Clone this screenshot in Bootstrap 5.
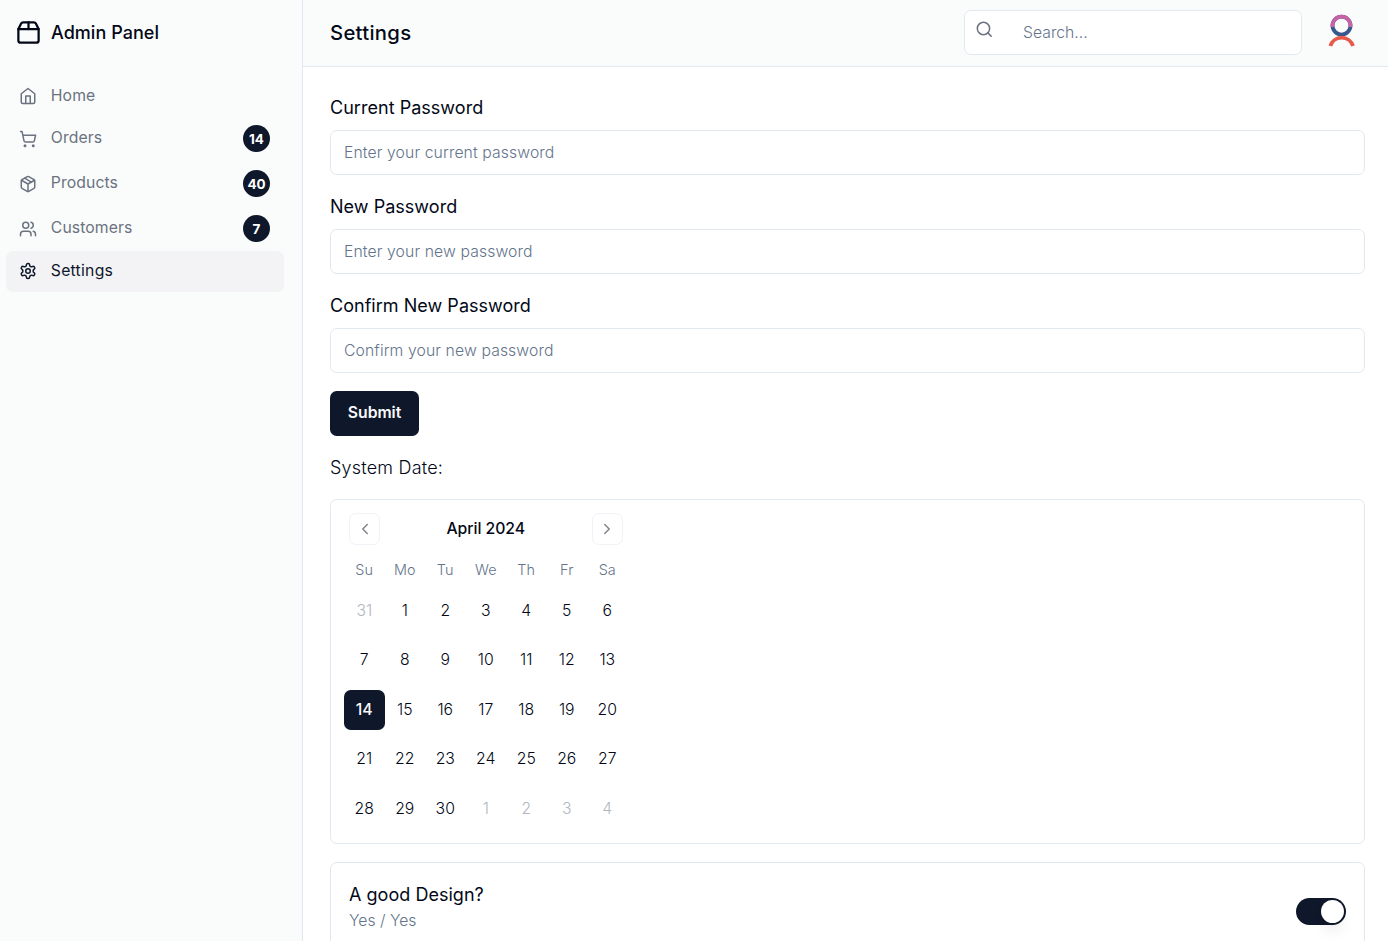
<!DOCTYPE html>
<html lang="en">
<head>
<meta charset="utf-8">
<meta name="viewport" content="width=device-width, initial-scale=1">
<title>Settings</title>
<link href="https://cdn.jsdelivr.net/npm/bootstrap@5.3.0/dist/css/bootstrap.min.css" rel="stylesheet">
<style>
:root { --ink:#020817; --navy:#0f172a; --line:#e2e8f0; --muted-gray:#6b7280; --slate:#64748b; }
body { font-family:Inter,sans-serif; font-size:15.75px; line-height:22.5px; color:var(--ink); background:#fff; height:941px; overflow:hidden; }
svg { display:block; flex:none; fill:none; stroke:currentColor; stroke-width:2; stroke-linecap:round; stroke-linejoin:round; }
.sidebar { width:303px; border-right:1px solid var(--line); background:#fafcfb; }
.brand { height:67px; padding:0 0 1px 15px; gap:9px; font-size:18px; font-weight:500; letter-spacing:.04px; }
.brand svg { margin-top:-2px; }
.side-nav { padding:8.5px 18px 0 6px; }
.side-nav .nav-link { display:flex; align-items:center; gap:13.8px; padding:9px 14px 9px 13px; color:var(--muted-gray); border-radius:7px; line-height:22.5px; letter-spacing:.1px; }
.side-nav .nav-link span:first-of-type { position:relative; top:-.6px; }
.side-nav .nav-link.single span:first-of-type { top:0; }
.side-nav .nav-link.active { background:#f3f3f6; color:var(--navy); letter-spacing:.25px; }
.count { width:27px; height:27px; margin-left:auto; padding-top:1px; border-radius:50%; background:var(--navy); color:#fff; font-size:13.5px; font-weight:700; letter-spacing:0; }
.topbar { height:67px; border-bottom:1px solid var(--line); background:#fafcfb; padding:0 26px 0 27px; }
.topbar h1 { font-size:20.25px; font-weight:500; letter-spacing:.3px; margin:0; }
.search-box { width:338px; height:45px; margin:-2px 20px 0 0; border:1px solid var(--line); border-radius:6.75px; background:#fff; padding:0 10px; gap:30px; }
.search-box input { border:0; outline:0; padding:0; background:none; width:220px; margin:2px 0 0 -.5px; }
.search-box svg { color:var(--muted-gray); margin:-5px 0 0; }
::placeholder, .form-control::placeholder { color:var(--slate); opacity:1; font-weight:300; letter-spacing:.1px; }
.search-box input::placeholder { letter-spacing:0; }
.content-area { padding:27px 23px 0 27px; }
.form-label { display:block; font-size:18px; line-height:27px; margin:0 0 9px; letter-spacing:.03px; }
.sys-date { margin:18px 0; font-weight:300; letter-spacing:.2px; }
.field { margin-bottom:18px; }
.field .form-control { height:45px; border-color:var(--line); border-radius:6.75px; font-size:15.75px; padding:9px 13px; color:var(--ink); }
.btn-submit { width:89px; height:45px; padding:0 0 2px; background:var(--navy); color:#f8fafc; border-radius:6.75px; font-size:15.75px; font-weight:600; letter-spacing:-.05px; border:0; }
.panel { border:1px solid var(--line); border-radius:6.75px; }
.calendar { height:345px; padding:13px; }
.cal-inner { width:283.5px; }
.cal-head { height:32px; padding:0 5px; margin-bottom:14px; font-weight:500; letter-spacing:-.05px; }
.cal-btn { width:31px; height:32px; padding:0; border:1px solid #f0f2f7; border-radius:6.75px; background:none; color:#80848b; display:flex; align-items:center; justify-content:center; }
.cal-grid { display:grid; grid-template-columns:repeat(7,40.5px); text-align:center; }
.cal-grid.days { font-size:14.4px; line-height:22px; color:var(--slate); margin-bottom:9.5px; font-weight:300; letter-spacing:.1px; }
.cal-grid.dates { row-gap:9px; font-weight:300; }
.cal-grid.dates span { height:40.5px; line-height:39.5px; border-radius:6.75px; }
.cal-grid .off { color:#b0b7c0; }
.cal-grid .sel { background:var(--navy); color:#f8fafc; font-weight:500; }
.design-row { margin-top:18px; height:120px; padding:18px; }
.design-title { font-size:18px; line-height:27px; letter-spacing:.03px; }
.design-note { color:var(--slate); font-weight:300; margin-top:2px; }
.toggle { width:50px; height:27px; margin-top:17px; border-radius:14px; background:var(--navy); padding:2px 2.5px; display:flex; justify-content:flex-end; }
.toggle span { width:23px; height:23px; border-radius:50%; background:#fff; box-shadow:0 10px 15px -3px rgba(0,0,0,.1),0 4px 6px -4px rgba(0,0,0,.1); }
.avatar { stroke-linecap:butt; stroke-width:3.8; }
</style>
</head>
<body>
<div class="d-flex h-100">
  <aside class="sidebar flex-shrink-0 h-100">
    <div class="brand d-flex align-items-center">
      <svg width="27" height="27" viewBox="0 0 24 24"><path d="M3 9h18v10a2 2 0 0 1-2 2H5a2 2 0 0 1-2-2V9Z"/><path d="m3 9 2.45-4.9A2 2 0 0 1 7.24 3h9.52a2 2 0 0 1 1.8 1.1L21 9"/><path d="M12 3v6"/></svg>
      <span>Admin Panel</span>
    </div>
    <nav class="side-nav nav flex-column flex-nowrap">
      <a class="nav-link single"><svg width="18" height="18" viewBox="0 0 24 24"><path d="m3 9 9-7 9 7v11a2 2 0 0 1-2 2H5a2 2 0 0 1-2-2z"/><path d="M9 22V12h6v10"/></svg><span>Home</span></a>
      <a class="nav-link"><svg width="18" height="18" viewBox="0 0 24 24"><circle cx="8" cy="21" r="1"/><circle cx="19" cy="21" r="1"/><path d="M2.05 2.05h2l2.66 12.42a2 2 0 0 0 2 1.58h9.78a2 2 0 0 0 1.95-1.57l1.65-7.43H5.12"/></svg><span>Orders</span><span class="count d-flex align-items-center justify-content-center">14</span></a>
      <a class="nav-link"><svg width="18" height="18" viewBox="0 0 24 24"><path d="m7.5 4.27 9 5.15"/><path d="M21 8a2 2 0 0 0-1-1.73l-7-4a2 2 0 0 0-2 0l-7 4A2 2 0 0 0 3 8v8a2 2 0 0 0 1 1.73l7 4a2 2 0 0 0 2 0l7-4A2 2 0 0 0 21 16Z"/><path d="m3.3 7 8.7 5 8.7-5M12 22V12"/></svg><span>Products</span><span class="count d-flex align-items-center justify-content-center">40</span></a>
      <a class="nav-link"><svg width="18" height="18" viewBox="0 0 24 24"><path d="M16 21v-2a4 4 0 0 0-4-4H6a4 4 0 0 0-4 4v2"/><circle cx="9" cy="7" r="4"/><path d="M22 21v-2a4 4 0 0 0-3-3.87M16 3.13a4 4 0 0 1 0 7.75"/></svg><span>Customers</span><span class="count d-flex align-items-center justify-content-center">7</span></a>
      <a class="nav-link single active"><svg width="18" height="18" viewBox="0 0 24 24"><path d="M12.22 2h-.44a2 2 0 0 0-2 2v.18a2 2 0 0 1-1 1.73l-.43.25a2 2 0 0 1-2 0l-.15-.08a2 2 0 0 0-2.73.73l-.22.38a2 2 0 0 0 .73 2.73l.15.1a2 2 0 0 1 1 1.72v.51a2 2 0 0 1-1 1.74l-.15.09a2 2 0 0 0-.73 2.73l.22.38a2 2 0 0 0 2.73.73l.15-.08a2 2 0 0 1 2 0l.43.25a2 2 0 0 1 1 1.73V20a2 2 0 0 0 2 2h.44a2 2 0 0 0 2-2v-.18a2 2 0 0 1 1-1.73l.43-.25a2 2 0 0 1 2 0l.15.08a2 2 0 0 0 2.73-.73l.22-.39a2 2 0 0 0-.73-2.73l-.15-.08a2 2 0 0 1-1-1.74v-.5a2 2 0 0 1 1-1.74l.15-.09a2 2 0 0 0 .73-2.73l-.22-.38a2 2 0 0 0-2.73-.73l-.15.08a2 2 0 0 1-2 0l-.43-.25a2 2 0 0 1-1-1.73V4a2 2 0 0 0-2-2z"/><circle cx="12" cy="12" r="3"/></svg><span>Settings</span></a>
    </nav>
  </aside>
  <div class="flex-grow-1">
    <header class="topbar d-flex align-items-center">
      <h1 class="me-auto">Settings</h1>
      <div class="search-box d-flex align-items-center">
        <svg width="18.500" height="18.500" viewBox="0 0 24 24"><circle cx="11" cy="11" r="8"/><path d="m21 21-4.3-4.3"/></svg>
        <input type="search" placeholder="Search...">
      </div>
      <svg class="avatar" width="40" height="40" viewBox="0 0 40 40"><circle cx="19.5" cy="12.6" r="9" stroke="#38578f"/><path d="M10.5 14V12.600A9 9 0 0 1 28.500 12.600V14" stroke="#c563a5"/><path d="M8.300 33A11.900 11.900 0 0 1 31 33" stroke="#e8594b"/></svg>
    </header>
    <main class="content-area">
      <div class="field"><label class="form-label" for="p1">Current Password</label><input id="p1" class="form-control" type="password" placeholder="Enter your current password"></div>
      <div class="field"><label class="form-label" for="p2">New Password</label><input id="p2" class="form-control" type="password" placeholder="Enter your new password"></div>
      <div class="field"><label class="form-label" for="p3">Confirm New Password</label><input id="p3" class="form-control" type="password" placeholder="Confirm your new password"></div>
      <button class="btn btn-submit d-block">Submit</button>
      <div class="form-label sys-date">System Date:</div>
      <section class="panel calendar">
        <div class="cal-inner">
          <div class="cal-head d-flex align-items-center justify-content-between">
            <button class="cal-btn"><svg width="18" height="18" viewBox="0 0 24 24"><path d="m15 18-6-6 6-6"/></svg></button>
            <span>April 2024</span>
            <button class="cal-btn"><svg width="18" height="18" viewBox="0 0 24 24"><path d="m9 18 6-6-6-6"/></svg></button>
          </div>
          <div class="cal-grid days"><span>Su</span><span>Mo</span><span>Tu</span><span>We</span><span>Th</span><span>Fr</span><span>Sa</span></div>
          <div class="cal-grid dates">
            <span class="off">31</span><span>1</span><span>2</span><span>3</span><span>4</span><span>5</span><span>6</span>
            <span>7</span><span>8</span><span>9</span><span>10</span><span>11</span><span>12</span><span>13</span>
            <span class="sel">14</span><span>15</span><span>16</span><span>17</span><span>18</span><span>19</span><span>20</span>
            <span>21</span><span>22</span><span>23</span><span>24</span><span>25</span><span>26</span><span>27</span>
            <span>28</span><span>29</span><span>30</span><span class="off">1</span><span class="off">2</span><span class="off">3</span><span class="off">4</span>
          </div>
        </div>
      </section>
      <section class="panel design-row d-flex justify-content-between align-items-start">
        <div><div class="design-title">A good Design?</div><div class="design-note">Yes / Yes</div></div>
        <div class="toggle"><span></span></div>
      </section>
    </main>
  </div>
</div>
<script src="https://cdn.jsdelivr.net/npm/bootstrap@5.3.0/dist/js/bootstrap.bundle.min.js"></script>
</body>
</html>
